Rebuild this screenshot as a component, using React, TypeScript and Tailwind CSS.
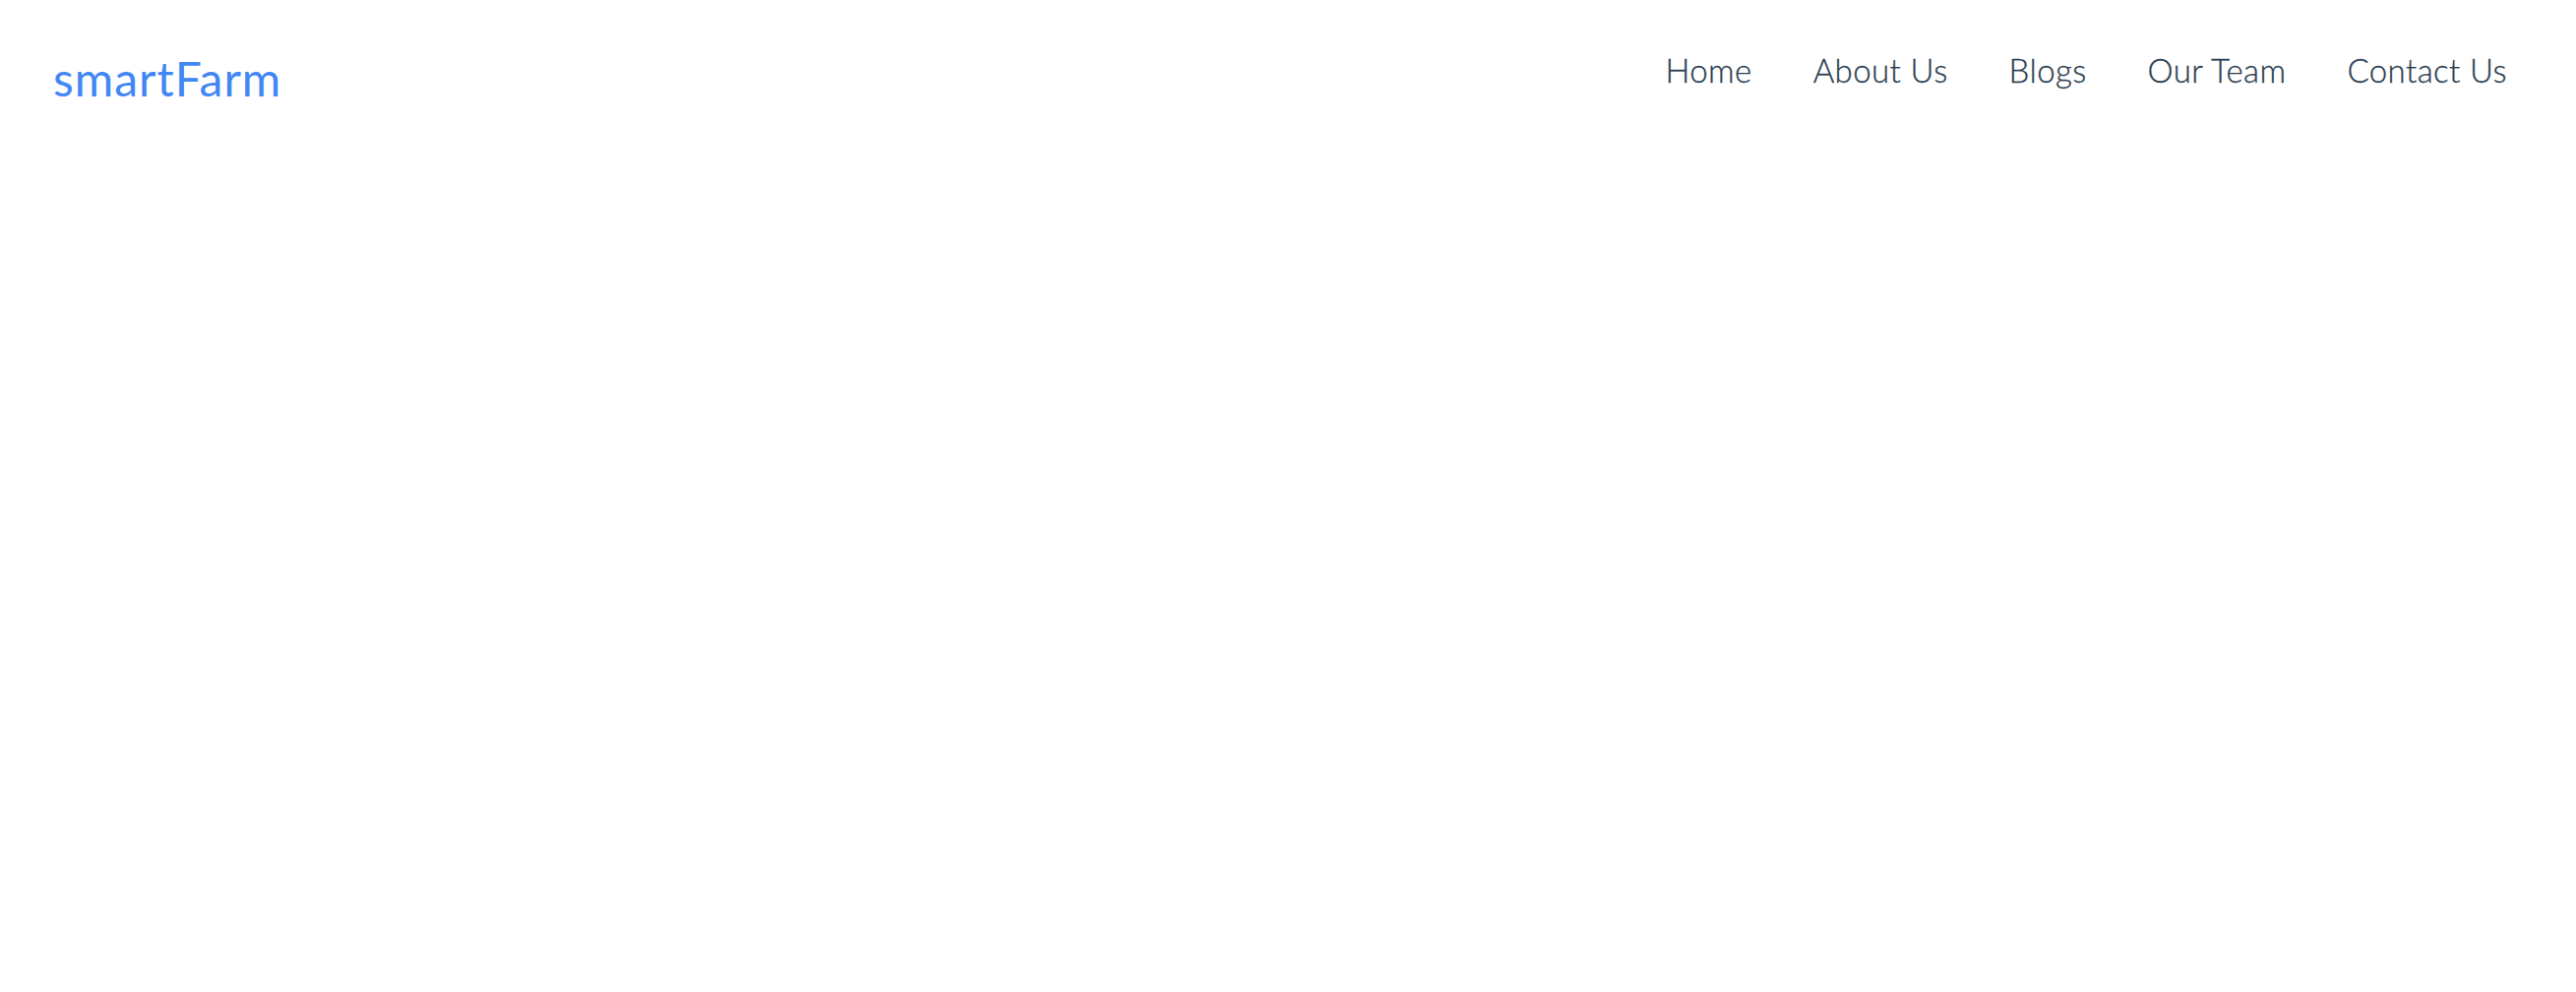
export default function App() {
  const links = ["Home", "About Us", "Blogs", "Our Team", "Contact Us"];
  return (
    <div className="min-h-screen w-full bg-white" style={{ fontFamily: "Lato, 'Noto Sans', sans-serif" }}>
      <header className="flex items-start justify-between pl-[54px] pr-[70px] pt-[50px]">
        <a className="text-[48px] leading-[60px] text-[#4287f5] tracking-[1px]" href="#">smartFarm</a>
        <nav className="flex gap-[62px] -mt-[4px]">
          {links.map((l) => (
            <a key={l} href="#" className="text-[33px] leading-[50px] text-[#2c3e50] font-light tracking-[0.4px] [-webkit-text-stroke:0.3px_#2c3e50]">
              {l}
            </a>
          ))}
        </nav>
      </header>
    </div>
  );
}
